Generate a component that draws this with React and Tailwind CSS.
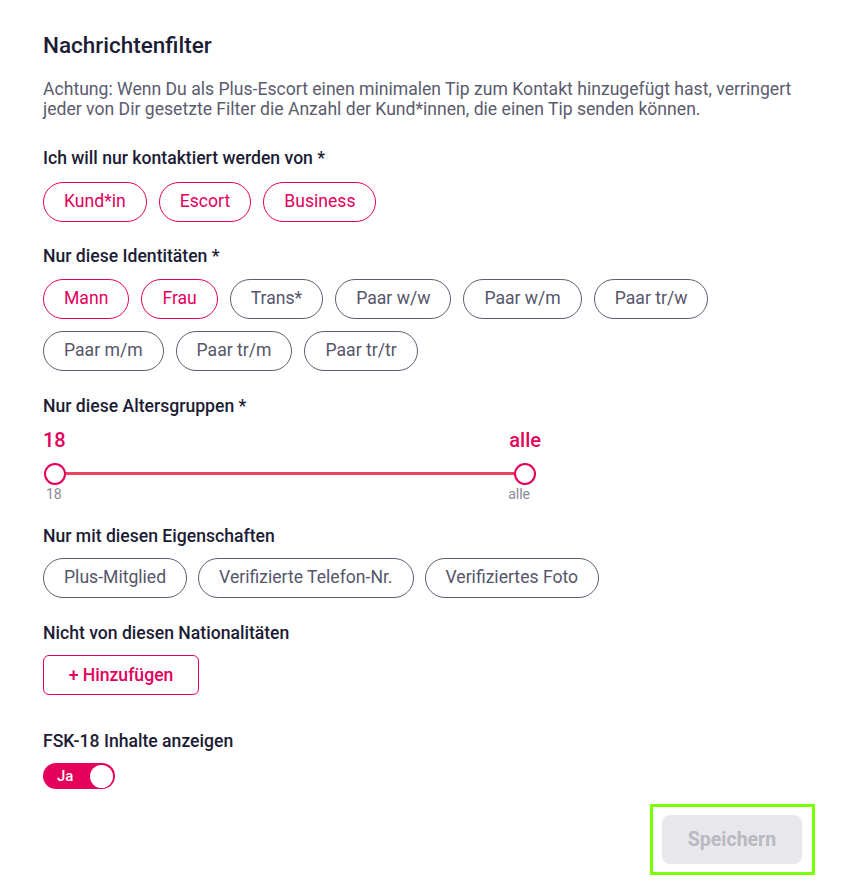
import React, { useState } from "react";

const Pill = ({ label, active }) => (
  <button
    className={`h-[40px] px-[20px] rounded-full border text-[17.6px] leading-none ${
      active ? "border-[#e4005b] text-[#e4005b]" : "border-[#5e5e72] text-[#55556b]"
    }`}
  >
    {label}
  </button>
);

const Label = ({ children, className = "" }) => (
  <div className={`text-[17.6px] leading-[24px] font-medium text-[#1c1c36] ${className}`}>
    {children}
  </div>
);

const contactOptions = [
  { label: "Kund*in", active: true },
  { label: "Escort", active: true },
  { label: "Business", active: true },
];

const identities = [
  { label: "Mann", active: true },
  { label: "Frau", active: true },
  { label: "Trans*" },
  { label: "Paar w/w" },
  { label: "Paar w/m" },
  { label: "Paar tr/w" },
  { label: "Paar m/m" },
  { label: "Paar tr/m" },
  { label: "Paar tr/tr" },
];

const properties = ["Plus-Mitglied", "Verifizierte Telefon-Nr.", "Verifiziertes Foto"];

const AgeSlider = () => (
  <div className="w-[498px]">
    <div className="flex justify-between text-[20px] leading-[24px] font-medium text-[#e4005b]">
      <span>18</span>
      <span>alle</span>
    </div>
    <div className="relative h-[22px] mt-[11px] mx-[1px]">
      <div className="absolute left-[12px] right-[16px] top-[9px] h-[3px] bg-[#e8435f]" />
      <div className="absolute left-0 top-0 w-[22px] h-[22px] rounded-full border-2 border-[#e4005b] bg-white" />
      <div className="absolute left-[470px] top-0 w-[22px] h-[22px] rounded-full border-2 border-[#e4005b] bg-white" />
    </div>
    <div className="flex justify-between pt-[1px] text-[14px] leading-[16px] text-[#8a8a98] pl-[3px] pr-[11px]">
      <span>18</span>
      <span>alle</span>
    </div>
  </div>
);

const App = () => {
  const [fsk, setFsk] = useState(true);

  return (
    <div
      className="min-h-screen bg-white px-[43px] pt-[31px] pb-[10px]"
      style={{ fontFamily: "Roboto, 'Liberation Sans', sans-serif" }}
    >
      <h1 className="text-[22.5px] leading-[28px] font-medium text-[#1c1c36]">Nachrichtenfilter</h1>
      <p className="mt-[20px] text-[17.6px] leading-[20px] text-[#5b5b6e]">
        Achtung: Wenn Du als Plus-Escort einen minimalen Tip zum Kontakt hinzugefügt hast, verringert
        jeder von Dir gesetzte Filter die Anzahl der Kund*innen, die einen Tip senden können.
      </p>

      <Label className="mt-[27px]">Ich will nur kontaktiert werden von *</Label>
      <div className="mt-[12px] flex flex-wrap gap-x-[12px] gap-y-[12px]">
        {contactOptions.map((o) => (
          <Pill key={o.label} {...o} />
        ))}
      </div>

      <Label className="mt-[22px]">Nur diese Identitäten *</Label>
      <div className="mt-[11px] flex flex-wrap gap-x-[12px] gap-y-[12px] max-w-[700px]">
        {identities.map((o) => (
          <Pill key={o.label} {...o} />
        ))}
      </div>

      <Label className="mt-[23px]">Nur diese Altersgruppen *</Label>
      <div className="mt-[10px]">
        <AgeSlider />
      </div>

      <Label className="mt-[22px]">Nur mit diesen Eigenschaften</Label>
      <div className="mt-[10px] flex flex-wrap gap-[11px]">
        {properties.map((p) => (
          <Pill key={p} label={p} />
        ))}
      </div>

      <Label className="mt-[23px]">Nicht von diesen Nationalitäten</Label>
      <button className="mt-[10px] h-[40px] w-[156px] rounded-[6px] border border-[#e4005b] text-[17.6px] font-medium text-[#e4005b]">
        + Hinzufügen
      </button>

      <Label className="mt-[34px]">FSK-18 Inhalte anzeigen</Label>
      <button
        onClick={() => setFsk(!fsk)}
        className="mt-[10px] flex items-center justify-between w-[72px] h-[26px] rounded-full bg-[#e4005b] pl-[14px] pr-[2px]"
      >
        <span className="text-[15px] font-medium text-white">{fsk ? "Ja" : "Nein"}</span>
        <span className="w-[23px] h-[23px] rounded-full bg-white" />
      </button>

      <div className="mt-[15px] flex justify-end mr-[-15px]">
        <div className="border-[3px] border-[#7cff00] pl-[9px] pr-[10px] py-[8px]">
          <button
            disabled
            className="block w-[140px] h-[49px] rounded-[8px] bg-[#e8e8ec] text-[19.5px] font-bold text-[#b9b9c2]"
          >
            Speichern
          </button>
        </div>
      </div>
    </div>
  );
};

export default App;
